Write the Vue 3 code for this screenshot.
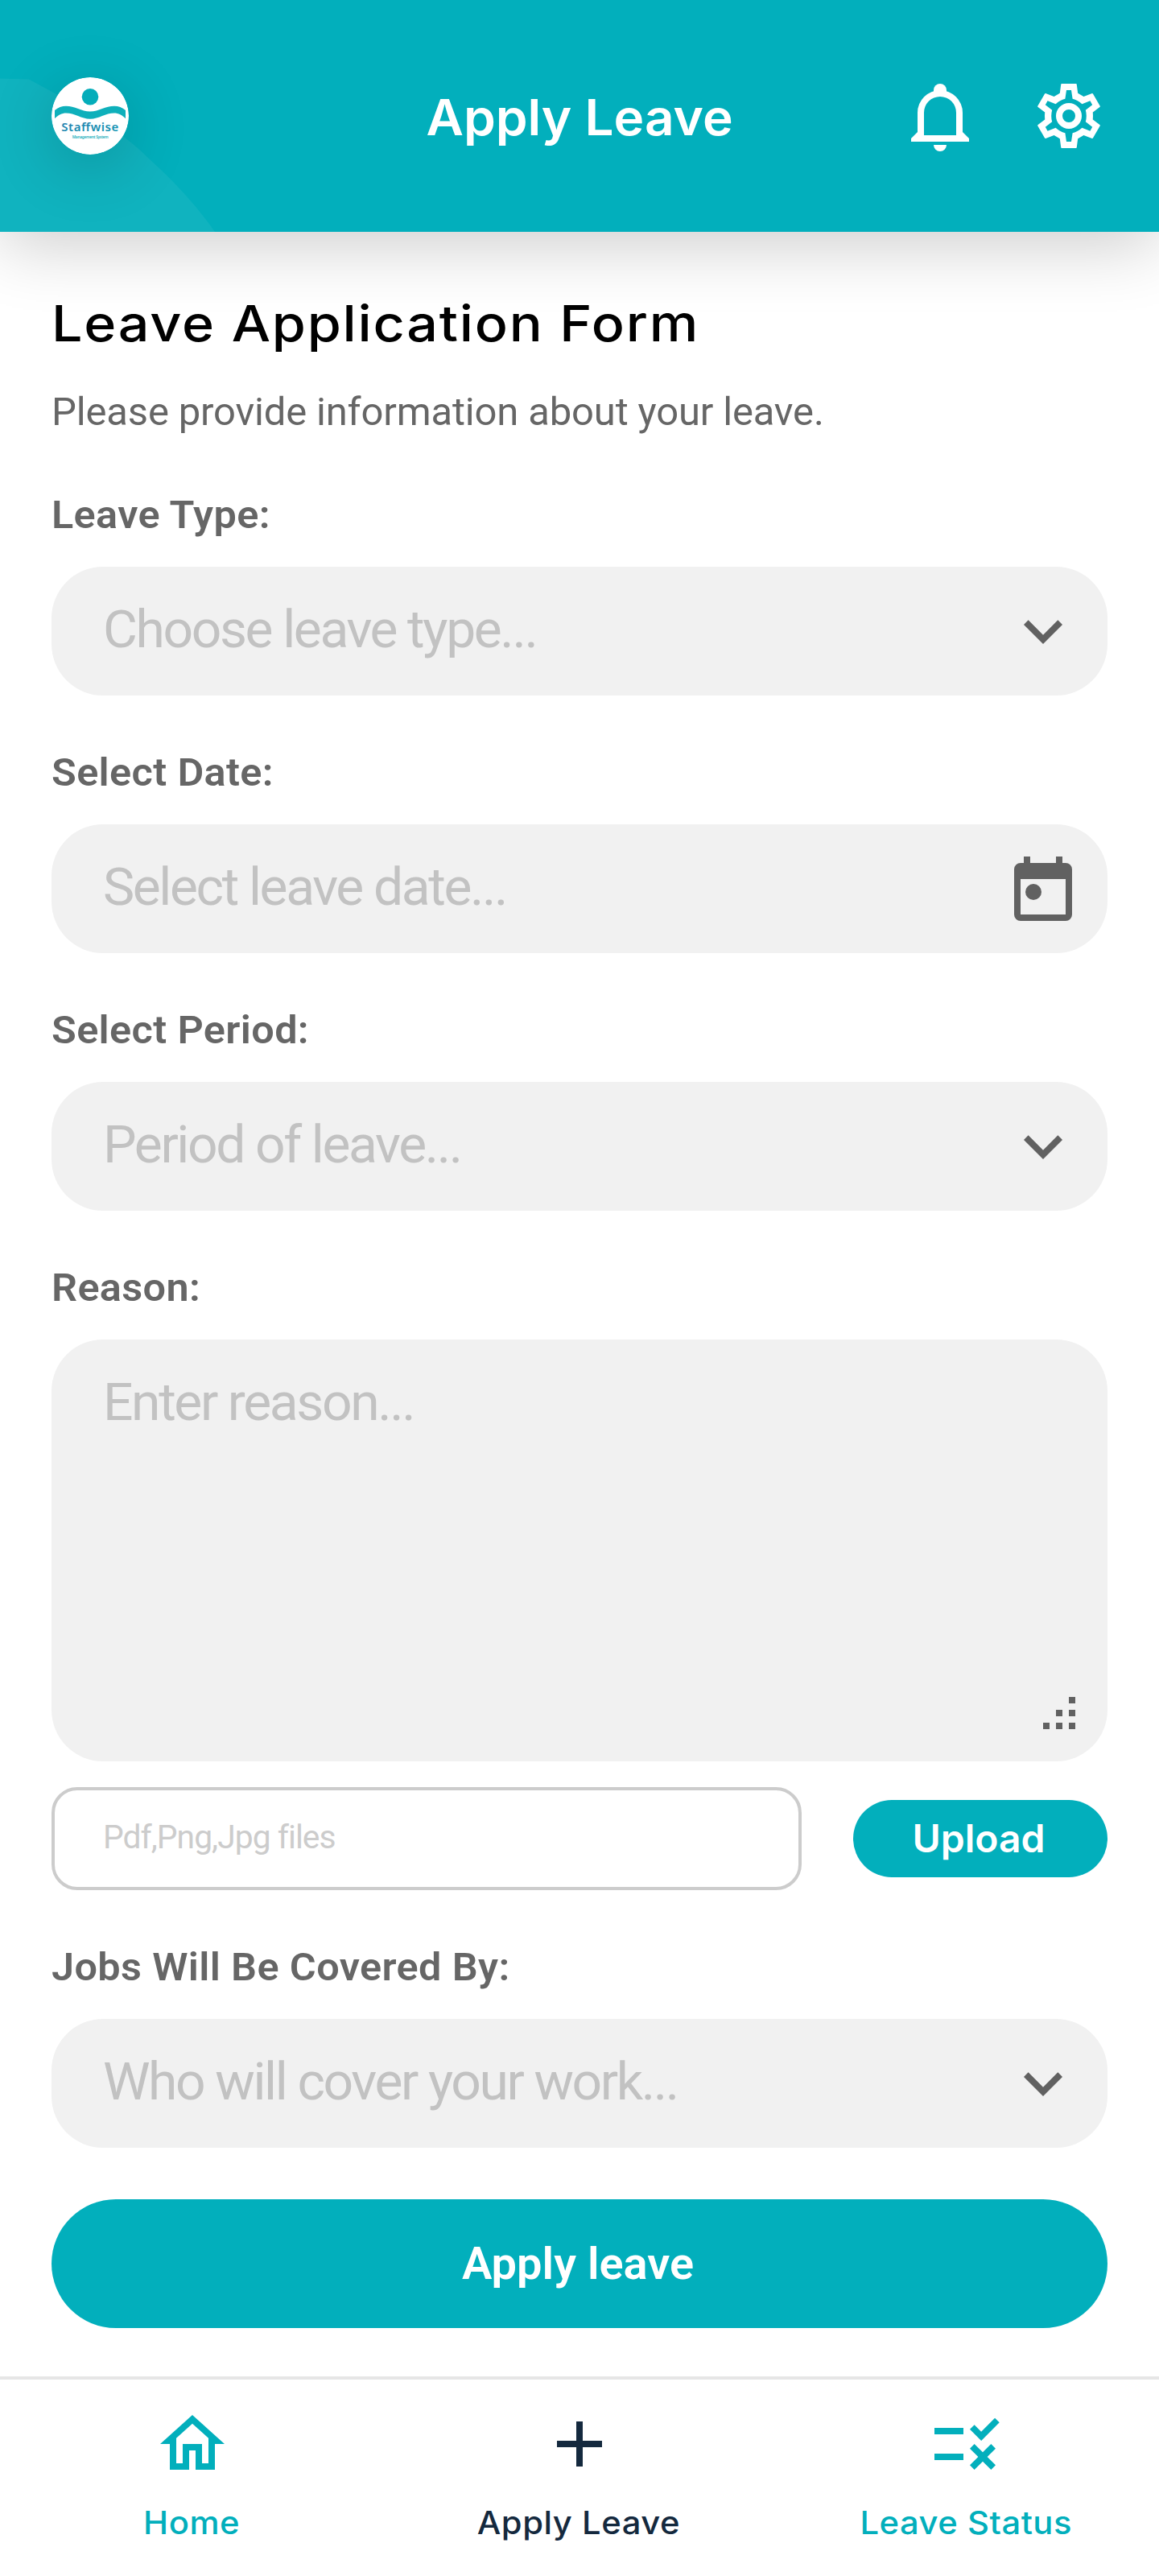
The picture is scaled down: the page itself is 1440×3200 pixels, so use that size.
<script setup>
const navItems = [
  { id: 'home', label: 'Home' },
  { id: 'apply', label: 'Apply Leave', active: true },
  { id: 'status', label: 'Leave Status' },
]

const pickers = [
  { label: 'Leave Type:', placeholder: 'Choose leave type...', icon: 'chevron' },
  { label: 'Select Date:', placeholder: 'Select leave date...', icon: 'calendar' },
  { label: 'Select Period:', placeholder: 'Period of leave...', icon: 'chevron' },
]
</script>

<template>
  <div class="screen">
    <header class="header">
      <svg class="swoosh" width="270" height="288" viewBox="0 0 270 288" aria-hidden="true">
        <path d="M0 97.5L36 98.5Q52 107 70 117Q150 161 185 197Q235 242 267 288H0Z" />
      </svg>

      <svg class="logo" viewBox="0 0 96 96" aria-label="Staffwise">
        <defs>
          <linearGradient id="wordmark" x1="0" y1="0" x2="1" y2="1">
            <stop offset="0" stop-color="#2a7fae" />
            <stop offset="1" stop-color="#0a97b4" />
          </linearGradient>
        </defs>
        <circle cx="48" cy="48" r="48" fill="#fff" />
        <circle cx="48" cy="24.3" r="10.3" fill="#04adba" />
        <path
          d="M4 41C8 37.500 13 35.800 18 35.800C29 35.800 37 42.500 48 42.500C59 42.500 67 35.800 78 35.800C83 35.800 88 37.500 92 41V51.200C88 47 83 44.500 78 44.500C67 44.500 59 51.700 48 51.700C37 51.700 29 44.500 18 44.500C13 44.500 8 47 4 51.200Z"
          fill="#0eb0bb"
        />
        <text class="wordmark" x="12.300" y="67.300" textLength="71" fill="url(#wordmark)">Staffwise</text>
        <text class="tagline" x="25.700" y="76.300" textLength="45" fill="#16aebb">Management System</text>
      </svg>

      <h1 class="title">Apply Leave</h1>

      <div class="actions">
        <svg class="icon" viewBox="0 0 24 24">
          <circle cx="12" cy="4" r="2" />
          <path d="M10 4h4v1.500h-4zM10 21h4a2 2 0 0 1-4 0z" />
          <path fill-rule="evenodd" d="M3 20v-1l2-2v-6a7 7 0 0 1 14 0v6l2 2v1zM7 18h10v-7a5 5 0 0 0-10 0z" />
        </svg>
        <svg class="icon" viewBox="0 0 24 24">
          <path
            fill-rule="evenodd"
            d="M9.750 2h4.500l.18.150L14.800 4.950 16.600 6 19.200 4.980 19.450 5.080 21.720 8.970 21.670 9.200 19.450 10.900Q19.550 12 19.450 13.100L21.670 14.800 21.720 15.030 19.450 18.920 19.200 19.020 16.600 18 14.800 19.050 14.430 21.850 14.250 22h-4.500L9.570 21.850 9.200 19.050 7.400 18 4.800 19.020 4.550 18.920 2.280 15.030 2.330 14.800 4.550 13.100Q4.450 12 4.550 10.900L2.330 9.200 2.280 8.970 4.550 5.080 4.800 4.980 7.400 6 9.200 4.950 9.570 2.150zM11.250 4L10.850 6.700Q9.200 7.100 7.900 8.300L5.400 7.300 4.700 8.550 6.800 10.200Q6.300 12 6.800 13.800L4.700 15.450 5.400 16.700 7.900 15.700Q9.200 16.900 10.850 17.300L11.250 20H12.750L13.150 17.300Q14.800 16.900 16.100 15.700L18.600 16.700 19.300 15.450 17.200 13.800Q17.700 12 17.200 10.200L19.300 8.550 18.600 7.300 16.100 8.300Q14.800 7.100 13.150 6.700L12.750 4z"
          />
          <circle cx="12" cy="12" r="3" fill="none" stroke="currentColor" stroke-width="2" />
        </svg>
      </div>
    </header>

    <main class="form">
      <h2 class="heading">Leave Application Form</h2>
      <p class="intro">Please provide information about your leave.</p>

      <section v-for="p in pickers" :key="p.label" class="group">
        <div class="label">{{ p.label }}</div>
        <div class="field">
          <span class="placeholder">{{ p.placeholder }}</span>
          <svg v-if="p.icon === 'chevron'" class="icon" viewBox="0 0 24 24">
            <path d="M16.590 8.590L12 13.170 7.410 8.590 6 10l6 6 6-6z" />
          </svg>
          <svg v-else class="icon" viewBox="0 0 24 24">
            <path
              fill-rule="evenodd"
              d="M6 2h2v2h8V2h2v2h1a2 2 0 0 1 2 2v14a2 2 0 0 1-2 2H5a2 2 0 0 1-2-2V6a2 2 0 0 1 2-2h1zM5 9v11h14V9z"
            />
            <circle cx="9" cy="13" r="2.500" />
          </svg>
        </div>
      </section>

      <section class="group">
        <div class="label">Reason:</div>
        <div class="field area">
          <span class="placeholder">Enter reason...</span>
          <svg class="grip" viewBox="0 0 40 40">
            <path d="M32 0h8v8h-8zM16 16h8v8h-8zM32 16h8v8h-8zM0 32h8v8h-8zM16 32h8v8h-8zM32 32h8v8h-8z" />
          </svg>
        </div>
      </section>

      <div class="upload-row">
        <div class="file"><span class="hint">Pdf,Png,Jpg files</span></div>
        <button class="upload" type="button">Upload</button>
      </div>

      <section class="group">
        <div class="label">Jobs Will Be Covered By:</div>
        <div class="field">
          <span class="placeholder">Who will cover your work...</span>
          <svg class="icon" viewBox="0 0 24 24">
            <path d="M16.590 8.590L12 13.170 7.410 8.590 6 10l6 6 6-6z" />
          </svg>
        </div>
      </section>

      <button class="submit" type="button">Apply leave</button>
    </main>

    <nav class="nav">
      <a v-for="n in navItems" :key="n.id" class="nav-item" :class="{ active: n.active }">
        <svg class="icon" viewBox="0 0 24 24">
          <path
            v-if="n.id === 'home'"
            d="M12 5.690l5 4.500V18h-2v-6H9v6H7v-7.810l5-4.500M12 3L2 12h3v8h6v-6h2v6h6v-8h3L12 3z"
          />
          <path v-else-if="n.id === 'apply'" d="M19 13h-6v6h-2v-6H5v-2h6V5h2v6h6v2z" />
          <path
            v-else
            d="M16.540 11L13 7.460l1.410-1.410 2.120 2.120 4.240-4.240 1.410 1.410L16.540 11zM11 7H2v2h9V7zm10 6.410L19.590 12 17 14.590 14.410 12 13 13.410 15.590 16 13 18.590 14.410 20 17 17.410 19.590 20 21 18.590 18.410 16 21 13.410zM11 15H2v2h9v-2z"
          />
        </svg>
        <span class="nav-label">{{ n.label }}</span>
      </a>
    </nav>
  </div>
</template>

<style>
body {
  background: #fff;
}
</style>

<style scoped>
.screen {
  width: 1440px;
  height: 3200px;
  overflow: hidden;
  display: flex;
  flex-direction: column;
  background: #fff;
  font-family: Roboto, "Liberation Sans", sans-serif;
}

svg {
  display: block;
  fill: currentColor;
}

.icon {
  width: 96px;
  height: 96px;
  flex: none;
}

h1,
h2,
p {
  margin: 0;
}

button {
  border: 0;
  padding: 0;
  background: #02afbc;
  color: #fff;
}

.header {
  position: relative;
  flex: none;
  height: 288px;
  box-sizing: border-box;
  padding: 0 64px;
  display: grid;
  grid-template-columns: 1fr auto 1fr;
  align-items: center;
  background: #02afbc;
  color: #fff;
  box-shadow: 0 16px 80px rgba(0, 0, 0, 0.2);
}

.swoosh {
  position: absolute;
  left: 0;
  top: 0;
  fill: rgba(255, 255, 255, 0.06);
}

.logo {
  position: relative;
  width: 96px;
  height: 96px;
  border-radius: 50%;
  box-shadow: 0 16px 80px rgba(0, 0, 0, 0.19);
}

.wordmark {
  font: 600 15px "Noto Sans", sans-serif;
}

.tagline {
  font: 600 4.800px "Noto Sans", sans-serif;
}

.title {
  font: 600 62px/64px Inter, sans-serif;
  padding-top: 3px;
  transform: scaleX(1.03);
}

.actions {
  display: flex;
  justify-content: flex-end;
  gap: 64px;
}

.form {
  flex: none;
  padding: 64px 64px 60px;
}

.heading {
  height: 96px;
  font: 500 62px/99px Inter, sans-serif;
  letter-spacing: 1.600px;
  color: #000;
  transform: scaleX(1.1);
  transform-origin: left;
}

.intro {
  margin: 32px 0 64px;
  font-size: 48px;
  line-height: 64px;
  letter-spacing: -0.150px;
  color: #666;
  transform: scaleX(1.02);
  transform-origin: left;
}

.group + .group {
  margin-top: 64px;
}

.label {
  font-size: 48px;
  font-weight: 600;
  line-height: 64px;
  letter-spacing: 0.350px;
  color: #666;
  transform: scaleX(1.05);
  transform-origin: left;
}

.field {
  margin-top: 32px;
  height: 160px;
  box-sizing: border-box;
  padding: 0 32px 0 64px;
  display: flex;
  align-items: center;
  justify-content: space-between;
  border-radius: 64px;
  background: #f1f1f1;
  color: #616161;
}

.placeholder {
  font-size: 64px;
  line-height: 96px;
  letter-spacing: -2.300px;
  color: #c2c2c2;
  padding-bottom: 2px;
  transform: scaleX(1.03);
  transform-origin: left;
}

.area {
  height: 524px;
  padding: 31px 40px 40px 64px;
  align-items: flex-start;
}

.grip {
  width: 40px;
  height: 40px;
  align-self: flex-end;
}

.upload-row {
  margin: 32px 0 64px;
  display: flex;
  align-items: center;
  gap: 64px;
}

.file {
  flex: 1;
  height: 128px;
  box-sizing: border-box;
  padding-left: 60px;
  border: 4px solid #ccc;
  border-radius: 32px;
  font-size: 40px;
  line-height: 117px;
  color: #ccc;
}

.hint {
  display: inline-block;
  letter-spacing: -0.950px;
  transform: scaleX(1.02);
  transform-origin: left;
}

.upload {
  width: 316px;
  height: 96px;
  padding-right: 4px;
  border-radius: 48px;
  font: 600 48px/96px Inter, sans-serif;
}

.submit {
  display: block;
  width: 100%;
  height: 160px;
  margin-top: 64px;
  padding-right: 4px;
  border-radius: 80px;
  font: 600 56px/161px Roboto, sans-serif;
}

.nav {
  flex: 1;
  padding-top: 32px;
  border-top: 4px solid #e6e6e6;
  display: grid;
  grid-template-columns: 478px 1fr 478px;
}

.nav-item {
  display: flex;
  flex-direction: column;
  align-items: center;
  gap: 20px;
  color: #02afbc;
}

.active {
  color: #14293e;
}

.nav-label {
  font: 500 39px/60px Inter, sans-serif;
  letter-spacing: 0.500px;
  margin-right: 2px;
  transform: scaleX(1.07);
}
</style>
